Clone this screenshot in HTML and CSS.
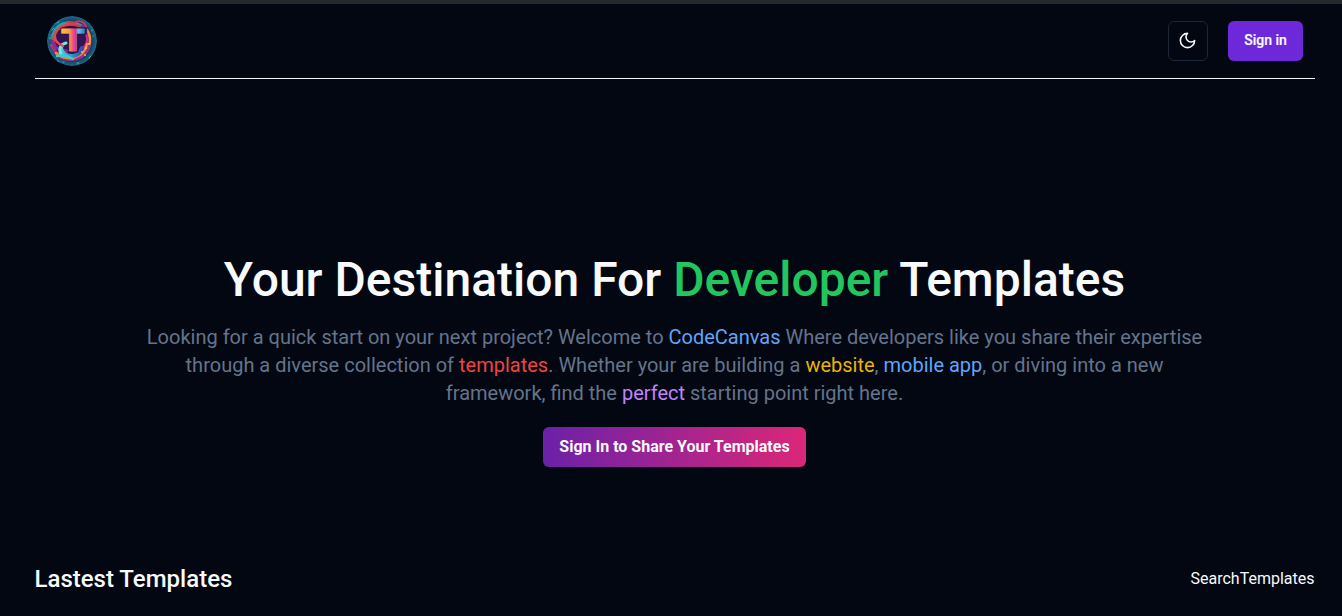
FILE: index.html
```html
<!DOCTYPE html>
<html lang="en">
<head>
<meta charset="utf-8">
<title>CodeCanvas</title>
<link rel="stylesheet" href="styles.css">
</head>
<body>
<div class="page">
  <header class="nav">
    <a class="logo" aria-label="Home">
      <svg width="50" height="50" viewBox="0 0 50 50">
        <defs>
          <clipPath id="disc"><circle cx="25" cy="25" r="25"/></clipPath>
          <radialGradient id="base"><stop offset=".68" stop-color="#34144f"/><stop offset=".8" stop-color="#143f66"/><stop offset="1" stop-color="#1a6f8c"/></radialGradient>
          <linearGradient id="warm" x1="0" y1="0" x2="1" y2="1"><stop stop-color="#e8553a"/><stop offset=".5" stop-color="#c92a50"/><stop offset="1" stop-color="#f18a2e"/></linearGradient>
          <linearGradient id="cool" x1="0" y1="0" x2="1" y2="0"><stop stop-color="#3fd6dc"/><stop offset=".5" stop-color="#2a9cc4"/><stop offset="1" stop-color="#3a48b4"/></linearGradient>
          <linearGradient id="letter" gradientUnits="userSpaceOnUse" x1="13" y1="14" x2="38" y2="14"><stop stop-color="#ffc044"/><stop offset=".38" stop-color="#ff9a3e"/><stop offset=".5" stop-color="#f8557a"/><stop offset=".62" stop-color="#d936a0"/><stop offset=".74" stop-color="#5fc4de"/><stop offset="1" stop-color="#3a72b4"/></linearGradient>
        </defs>
        <g clip-path="url(#disc)" fill="none" stroke-linecap="round">
          <circle cx="25" cy="25" r="25" fill="url(#base)"/>
          <path d="M7 30C3 18 9 8 20 7c9-1 20 3 22 13" stroke="#23a3b4" stroke-width="3"/>
          <path d="M8 31C4 20 10 11 19 9c10-2 20 2 22 13 1 9-5 16-13 18" stroke="url(#warm)" stroke-width="2.8"/>
          <path d="M36 11c8 7 8 19-1 27" stroke="#7a2a9c" stroke-width="4.5"/>
          <path d="M40 14c5 8 4 17-3 23" stroke="#f0902c" stroke-width="2.4"/>
          <path d="M36 13c6 7 5 15-1 20" stroke="#d22c82" stroke-width="2"/>
          <path d="M20 6c3-1 6 2 9 0 4-2 8 0 10 4" stroke="#c83b54" stroke-width="2"/>
          <path d="M5 25c2 7 7 9 15 10" stroke="#7e2aa0" stroke-width="3"/>
          <path d="M5 30c4 9 11 14 21 13 8-1 14-6 16-13" stroke="#a52d82" stroke-width="3.6"/>
          <path d="M9 37c7 6 16 7 24 2 4-3 6-6 7-11" stroke="#ef8b35" stroke-width="2.5"/>
          <path d="M14 31c0 7 8 11 15 8 3-1 5-4 6-7" stroke="url(#cool)" stroke-width="4"/>
          <path d="M14 38c-3-5 0-10 5-11" stroke="#7de3d4" stroke-width="3"/>
          <path d="M10 40c6-2 12 1 16 3" stroke="#45c8cb" stroke-width="2.4"/>
          <path d="M8 20c0 5 3 8 8 10" stroke="#e2495c" stroke-width="2.2"/>
          <path d="M5 14l2-2M10 7l2-1M3 21v2M44 40l-2 2M10 45l2 1M30 47h2M16 46h1M45 14v1" stroke="#47b9ad" stroke-width="1"/>
          <path d="M39 32h.1M35 36h.1M42 28h.1M38 39h.1" stroke="#ffc04a" stroke-width="1.8"/>
          <path d="M4 19h.1M46 20h.1M4 29h.1" stroke="#e39a4a" stroke-width="1.2"/>
        </g>
        <g class="logo-letter" text-anchor="middle" stroke-linejoin="round">
          <text x="26.6" y="35.4" textLength="24" lengthAdjust="spacingAndGlyphs" fill="#2a1558" stroke="#2a1558" stroke-width="3.4">T</text>
          <text x="26" y="34.6" textLength="24" lengthAdjust="spacingAndGlyphs" fill="url(#letter)" stroke="url(#letter)" stroke-width=".9">T</text>
        </g>
      </svg>
    </a>
    <div class="actions">
      <button class="theme" aria-label="Toggle theme">
        <svg width="19" height="19" viewBox="0 0 24 24" fill="none" stroke="currentColor" stroke-width="2" stroke-linecap="round" stroke-linejoin="round"><path d="M12 3a6 6 0 0 0 9 9 9 9 0 1 1-9-9Z"/></svg>
      </button>
      <button class="signin">Sign in</button>
    </div>
  </header>
  <main>
    <section class="hero">
      <h1>Your Destination For <span class="green">Developer</span> Templates</h1>
      <p>Looking for a quick start on your next project? Welcome to <span class="blue">CodeCanvas</span> Where developers like you share their expertise<br>through a diverse collection of <span class="red">templates</span>. Whether your are building a <span class="yellow">website</span>, <span class="blue">mobile app</span>, or diving into a new<br>framework, find the <span class="purple">perfect</span> starting point right here.</p>
      <button class="share">Sign In to Share Your Templates</button>
    </section>
    <section class="latest">
      <h2>Lastest Templates</h2>
      <a>SearchTemplates</a>
    </section>
  </main>
</div>
</body>
</html>
```
FILE: styles.css
```css
* { box-sizing: border-box; }
body {
  margin: 0;
  height: 616px;
  overflow: hidden;
  background: #030711;
  color: #f8fafc;
  font: 16px/24px Roboto, sans-serif;
  border-top: 4px solid #24292c;
}
h1, h2, p { margin: 0; }
button { font-family: inherit; border: 0; padding: 0; color: inherit; }
.page { margin: 0 27px 0 35px; }
.nav {
  height: 75px;
  padding: 0 12px;
  display: flex;
  align-items: center;
  justify-content: space-between;
  border-bottom: 1px solid #f1f5f9;
}
.logo, .logo svg { display: block; }
.logo-letter { font: 900 32px Roboto, sans-serif; }
.actions { display: flex; gap: 20px; }
.theme {
  display: flex;
  align-items: center;
  justify-content: center;
  width: 40px;
  height: 40px;
  padding: 0 1px 1px 0;
  border: 1px solid #1d283a;
  border-radius: 6px;
  background: #030711;
}
.signin {
  width: 75px;
  height: 40px;
  padding-bottom: 2px;
  border-radius: 6px;
  background: #6d28d9;
  font-size: 14px;
  font-weight: 500;
  -webkit-text-stroke: 0.2px currentColor;
}
.hero {
  margin-right: 1px;
  padding-top: 177px;
  display: flex;
  flex-direction: column;
  align-items: center;
  text-align: center;
}
h1 {
  font-size: 48px;
  line-height: 48px;
  font-weight: 500;
  white-space: nowrap;
}
.hero p {
  margin-top: 19px;
  font-size: 20px;
  line-height: 28px;
  color: #64748b;
  white-space: nowrap;
}
.green { color: #22c55e; }
.blue { color: #60a5fa; }
.red { color: #ef4444; }
.yellow { color: #eab308; }
.purple { color: #c084fc; }
.share {
  margin-top: 20px;
  width: 263px;
  height: 40px;
  padding-bottom: 2px;
  border-radius: 6px;
  background: linear-gradient(to right, #6b21a8, #db2777);
  font-size: 16px;
  font-weight: 700;
}
.latest {
  margin: 96px 0.5px 0 -0.5px;
  display: flex;
  align-items: center;
  justify-content: space-between;
}
h2 { font-size: 24px; line-height: 32px; font-weight: 500; }
```
